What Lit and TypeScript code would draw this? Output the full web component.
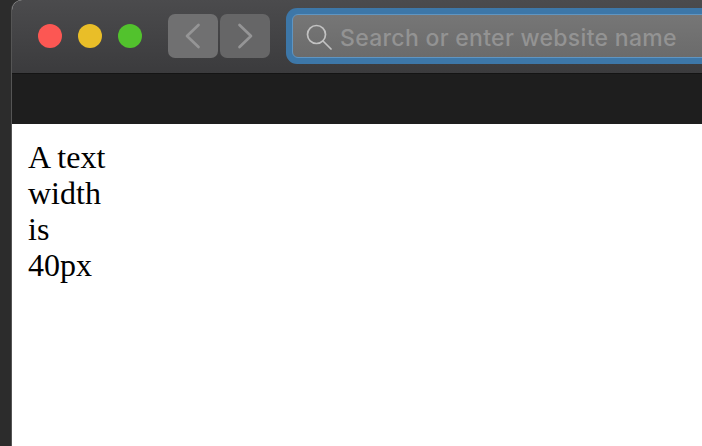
import { LitElement, html, css } from "lit";
import { customElement } from "lit/decorators.js";

@customElement("app-root")
export class AppRoot extends LitElement {
  static styles = css`
    :host { display: block; width: 702px; height: 446px; overflow: hidden; background: #2c2c2c; }
    .window { margin-left: 12px; height: 446px; display: flex; flex-direction: column; background: #fff; border-top-left-radius: 10px; overflow: hidden; box-shadow: -1px 0 0 #555; }
    .toolbar { height: 74px; flex: none; box-sizing: border-box; border-bottom: 1px solid #141414; background: linear-gradient(#4b4b4d, #3b3b3d); display: flex; align-items: center; padding: 0 0 1px 26px; }
    .lights { display: flex; gap: 16px; margin-right: 26px; }
    .light { width: 24px; height: 24px; border-radius: 50%; }
    .red { background: #fc5753; }
    .yellow { background: #e9be28; }
    .green { background: #52c22d; }
    .nav { display: flex; gap: 2px; margin-right: 16px; }
    .nav-btn { width: 50px; height: 44px; border-radius: 7px; background: #6b6b6c; display: flex; align-items: center; justify-content: center; }
    .nav-btn.back { background: #707071; }
    .nav-btn.forward { background: #666667; }
    .nav-btn svg { width: 18px; height: 26px; fill: none; stroke: #959596; stroke-width: 2.7; stroke-linecap: round; stroke-linejoin: round; }
    .search { flex: 1; height: 56px; margin-right: -20px; box-sizing: border-box; border-radius: 11px; background: #3d77a8; padding: 6px; display: flex; }
    .field { flex: 1; border-radius: 6px; border: 1px solid #5f95c2; background: linear-gradient(#767676, #6b6b6b); display: flex; align-items: center; padding-left: 13px; gap: 8px; }
    .field svg { width: 26px; height: 26px; fill: none; stroke: #c2c2c2; stroke-width: 1.7; stroke-linecap: round; flex: none; margin-top: 1px; }
    .placeholder { font-family: Inter, "Noto Sans", sans-serif; font-size: 23px; font-weight: 500; letter-spacing: 0.3px; color: #939393; white-space: nowrap; margin-top: 4px; }
    .tabs { height: 50px; flex: none; background: #1e1e1e; }
    .content { flex: 1; padding: 15px 16px 16px; font-family: "Liberation Serif", serif; font-size: 32px; line-height: 36px; color: #000; }
  `;

  render() {
    return html`
      <div class="window">
        <div class="toolbar">
          <div class="lights">
            <div class="light red"></div>
            <div class="light yellow"></div>
            <div class="light green"></div>
          </div>
          <div class="nav">
            <div class="nav-btn back"><svg viewBox="0 0 18 26"><path d="M14.500 2 3 13l11.500 11"/></svg></div>
            <div class="nav-btn forward"><svg viewBox="0 0 18 26"><path d="M3.500 2 15 13 3.500 24"/></svg></div>
          </div>
          <div class="search">
            <div class="field">
              <svg viewBox="0 0 26 26"><circle cx="10.500" cy="10.500" r="9"/><path d="M17 17l8 8"/></svg>
              <span class="placeholder">Search or enter website name</span>
            </div>
          </div>
        </div>
        <div class="tabs"></div>
        <div class="content">A text<br />width<br />is<br />40px</div>
      </div>
    `;
  }
}
